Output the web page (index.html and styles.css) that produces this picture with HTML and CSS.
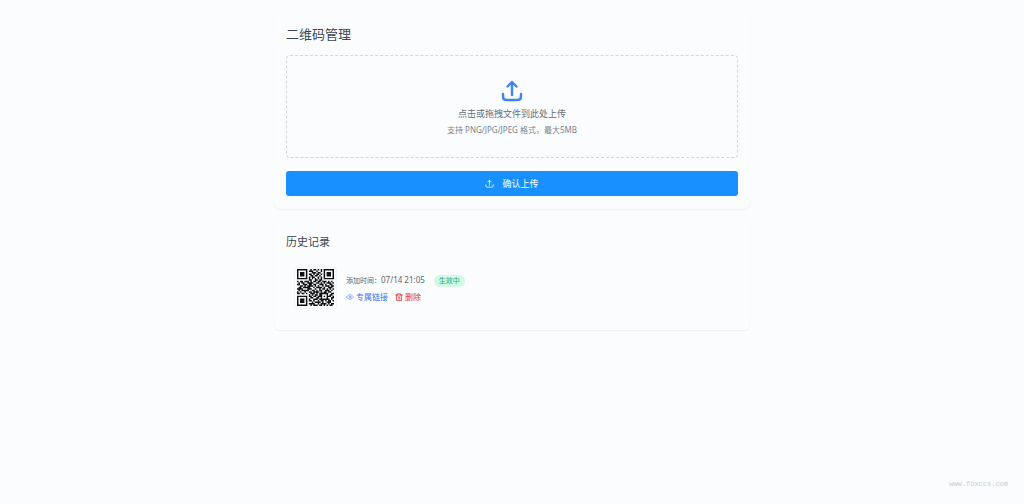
FILE: index.html
```html
<!DOCTYPE html>
<html lang="zh-CN">
<head>
<meta charset="utf-8">
<title>二维码管理</title>
<link rel="stylesheet" href="styles.css">
</head>
<body>
<main class="page">
  <section class="card">
    <h1 class="title">二维码管理</h1>
    <button type="button" class="dropzone">
      <svg class="drop-icon" viewBox="0 0 22 22" aria-hidden="true"><path d="M11 15V2.500M6.500 6.500L11 2 15.500 6.500M2 14v2.500q0 3.500 3.500 3.500h11q3.500 0 3.500-3.500V14"/></svg>
      <span class="drop-text">点击或拖拽文件到此处上传</span>
      <span class="drop-hint">支持 PNG/JPG/JPEG 格式，最大5MB</span>
    </button>
    <button type="button" class="submit">
      <svg class="submit-icon" viewBox="0 0 22 22" aria-hidden="true"><path d="M11 15V3M7 7l4-4 4 4M2 14v2.500q0 3.500 3.500 3.500h11q3.500 0 3.500-3.500V14"/></svg>
      <span>确认上传</span>
    </button>
  </section>

  <section class="card">
    <h2 class="subtitle">历史记录</h2>
    <div class="record">
      <div class="thumb"><svg class="qr" viewBox="0 0 25 25" role="img" aria-label="二维码"><path id="qr-modules"/></svg></div>
      <div class="info">
        <div class="row stamp">
          <span class="time"><span class="time-label">添加时间：</span>07/14 21:05</span>
          <span class="badge">生效中</span>
        </div>
        <div class="row actions">
          <a class="action link" href="#">
            <svg class="action-icon eye" viewBox="0 0 16 16" aria-hidden="true"><path d="M1 8q7-10 14 0-7 10-14 0z"/><circle cx="8" cy="8" r="2"/></svg>专属链接</a>
          <button type="button" class="action delete">
            <svg class="action-icon" viewBox="0 0 16 16" aria-hidden="true"><path d="M1 4h14M5 4V1.500h6V4M3 4v11h10V4M6.500 7v5M9.500 7v5"/></svg>删除</button>
        </div>
      </div>
    </div>
  </section>
</main>
<footer class="watermark">www.foxccs.com</footer>
<script src="qr.js"></script>
</body>
</html>
```
FILE: qr.js
```js
const rows = [
  "1111111001011010101111111",
  "1000001011100100101000001",
  "1011101000111011001011101",
  "1011101011010110101011101",
  "1011101001101101001011101",
  "1000001010110010101000001",
  "1111111010101010101111111",
  "0000000011001101100000000",
  "1011011101011011011101010",
  "0101100111100110101011101",
  "1100111011011001110100110",
  "0011010111101010010111011",
  "0110111110010111101001110",
  "1111000111001001011010101",
  "0101111100110101100111010",
  "1010010011011110101101100",
  "1101101001110101111110011",
  "0000000010101101100010110",
  "1111111011011011101011101",
  "1000001001100110100010011",
  "1011101010011101111111010",
  "1011101011010010110101101",
  "1011101000101111010011100",
  "1000001011110010111101011",
  "1111111001011101101010110"
];
let d = "";
rows.forEach((row, y) => {
  [...row].forEach((cell, x) => {
    if (cell === "1") d += `M${x} ${y}h1v1h-1z`;
  });
});
document.getElementById("qr-modules").setAttribute("d", d);
```
FILE: styles.css
```css
* { box-sizing: border-box; }
body {
  margin: 0;
  min-height: 100vh;
  display: flex;
  flex-direction: column;
  background: #fafcfe;
  color: #3b4550;
  font-family: "Noto Sans", "Noto Sans CJK SC", sans-serif;
  font-size: 8px;
}
button { font: inherit; color: inherit; background: none; border: 0; padding: 0; cursor: pointer; }
svg { display: block; fill: none; stroke: currentColor; stroke-linecap: round; stroke-linejoin: round; }
.page {
  flex: 1;
  display: flex;
  flex-direction: column;
  gap: 12px;
  width: 100%;
  max-width: 476px;
  margin: 0 auto;
  padding-top: 14px;
}
.card {
  padding: 12px 12px 13px;
  border-radius: 6px;
  background: #fafcfe;
  box-shadow: 0 1px 2px rgba(30, 50, 80, 0.06);
}
.title { margin: 0 0 13px; font-size: 13px; line-height: 16px; font-weight: 400; }
.subtitle { margin: 0 0 12px; font-size: 11px; line-height: 18px; font-weight: 400; }
.dropzone {
  display: flex;
  flex-direction: column;
  align-items: center;
  width: 100%;
  padding: 24px 12px 19px;
  border: 1px dashed #d5d7db;
  border-radius: 4px;
}
.drop-icon { width: 22px; height: 22px; margin-bottom: 4px; color: #3f83f6; stroke-width: 2.4; }
.drop-text { font-size: 9px; line-height: 16px; color: #666e78; }
.drop-hint { line-height: 16px; color: #7b838e; }
.submit {
  display: flex;
  align-items: center;
  justify-content: center;
  gap: 8px;
  width: 100%;
  height: 25px;
  margin-top: 13px;
  border-radius: 3px;
  background: #1890ff;
  color: #fff;
  font-size: 9px;
}
.submit-icon { width: 9px; height: 9px; stroke-width: 2; }
.record { display: flex; align-items: center; gap: 9px; padding: 3px 8px 8px; }
.thumb { padding: 2px; border: 1px solid #f3f4f6; border-radius: 3px; }
.qr { width: 37px; height: 37px; }
.qr path { fill: #111; stroke: none; }
.info { display: flex; flex-direction: column; gap: 4px; padding-top: 2px; }
.row { display: flex; align-items: center; line-height: 12px; }
.stamp { gap: 9px; }
.actions { gap: 7px; }
.time { color: #5b6470; }
.time-label { font-size: 7px; }
.badge { padding: 0 5px; border-radius: 6px; background: #d1fae5; color: #2fa57c; font-size: 7px; }
.action { display: flex; align-items: center; gap: 2px; text-decoration: none; }
.action-icon { width: 8px; height: 8px; stroke-width: 1.5; }
.eye { stroke-width: 1; }
.link { color: #3b72f0; }
.delete { color: #e03535; }
.watermark {
  align-self: flex-end;
  padding: 0 16px 14px;
  color: #c9cbce;
  font-family: "Liberation Mono", monospace;
  font-size: 7px;
  line-height: 12px;
}
```
